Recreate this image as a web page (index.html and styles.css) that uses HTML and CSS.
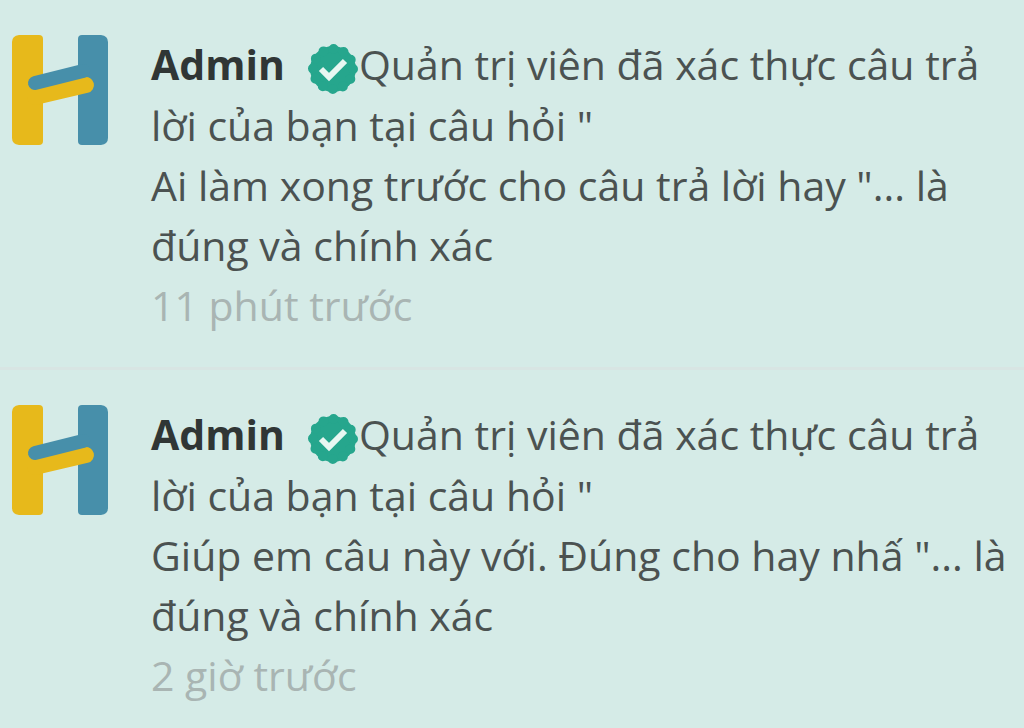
FILE: index.html
```html
<!DOCTYPE html>
<html lang="vi">
<head>
    <meta charset="UTF-8">
    <meta name="viewport" content="width=device-width, initial-scale=1.0">
    <title>Thông báo</title>
    <link rel="stylesheet" href="styles.css">
</head>
<body>
    <!-- shared shapes for the list -->
    <svg class="sprite" aria-hidden="true">
        <symbol id="logo" viewBox="0 0 98 112">
            <path d="M8 1H28Q32 1 32 5V107Q32 111 28 111H8Q1 110 1 104V8Q1 2 8 1Z" fill="#e7b91b"/>
            <path d="M71 1H90Q97 2 97 8V104Q97 110 90 111H71Q67 111 67 107V5Q67 1 71 1Z" fill="#478faa"/>
            <path d="M24 63L75 51" stroke="#e7b91b" stroke-width="16" stroke-linecap="round"/>
            <path d="M24 49L72 37" stroke="#478faa" stroke-width="14" stroke-linecap="round"/>
        </symbol>
        <symbol id="verified" viewBox="0 0 52 52">
            <circle cx="26" cy="26" r="23" fill="#26a68d"/>
            <circle cx="26" cy="26" r="20" fill="none" stroke="#26a68d" stroke-width="10" stroke-linecap="round" stroke-dasharray="0 10.472"/>
            <path d="M14 26L22 34L38 18" fill="none" stroke="#e8f7f2" stroke-width="6"/>
        </symbol>
    </svg>
    <ul class="notifications">
        <li class="notification">
            <svg class="avatar" role="img" aria-label="Admin"><use href="#logo"/></svg>
            <div class="content">
                <p class="message"><strong class="name">Admin</strong><svg class="badge" aria-hidden="true"><use href="#verified"/></svg>Quản trị viên đã xác thực câu trả lời của bạn tại câu hỏi "<br>Ai làm xong trước cho câu trả lời hay "... là đúng và chính xác</p>
                <span class="time">11 phút trước</span>
            </div>
        </li>
        <li class="notification">
            <svg class="avatar" role="img" aria-label="Admin"><use href="#logo"/></svg>
            <div class="content">
                <p class="message"><strong class="name">Admin</strong><svg class="badge" aria-hidden="true"><use href="#verified"/></svg>Quản trị viên đã xác thực câu trả lời của bạn tại câu hỏi "<br>Giúp em câu này với. Đúng cho hay nhấ "... là đúng và chính xác</p>
                <span class="time">2 giờ trước</span>
            </div>
        </li>
    </ul>
</body>
</html>
```
FILE: styles.css
```css
body {
    margin: 0;
    background-color: #d5ebe7;
    color: #4b5251;
    font-family: "Open Sans", "Noto Sans", sans-serif;
    font-size: 41px;
    line-height: 60px;
}
.sprite {
    position: absolute;
    width: 0;
    height: 0;
}
.notifications {
    list-style: none;
    margin: 0;
    padding: 0;
}
.notification {
    display: flex;
    align-items: flex-start;
    gap: 42px;
    padding: 34px 12px 32px 11px;
    border-bottom: 3px solid #d8e5e3;
}
.notification:last-child {
    border-bottom: none;
    padding-bottom: 20px;
}
.avatar {
    flex: none;
    width: 98px;
    height: 112px;
}
.content {
    flex: 1;
}
.message {
    margin: 0;
}
.name {
    color: #303635;
    font-weight: 700;
}
.badge {
    width: 52px;
    height: 52px;
    margin-left: 22px;
    vertical-align: -15px;
}
.time {
    display: block;
    color: #a9b5b3;
}
```
